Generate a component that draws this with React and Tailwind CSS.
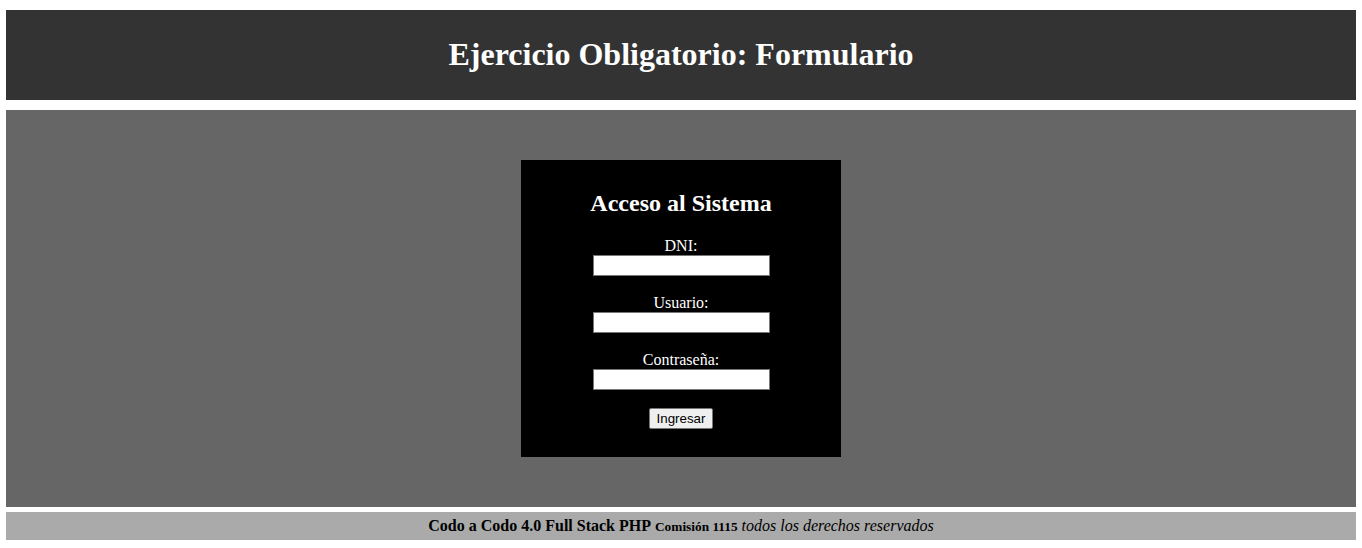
import React from "react";

const Field = ({ label, type = "text", first }) => (
  <div className={`flex flex-col items-center ${first ? "" : "mt-[17px]"}`}>
    <label className="block text-[16px] leading-[19px] text-white">{label}</label>
    <input
      type={type}
      className="w-[177px] h-[21px] bg-white border border-[#767676] px-[2px] text-[13.33px] text-black outline-none"
      style={{ fontFamily: '"Liberation Sans", Arial, sans-serif' }}
    />
  </div>
);

const App = () => {
  return (
    <div
      className="min-h-screen bg-white px-[6px] pt-[10px]"
      style={{ fontFamily: '"Liberation Serif", "Times New Roman", serif' }}
    >
      <header className="h-[90px] bg-[#333333] pt-[26px]">
        <h1 className="text-center text-[32px] leading-[37px] font-bold text-white">
          Ejercicio Obligatorio: Formulario
        </h1>
      </header>

      <main className="mt-[10px] bg-[#666666] py-[50px] flex justify-center">
        <form
          className="w-[320px] bg-black pt-[29px] pb-[28px] flex flex-col items-center"
          onSubmit={(e) => e.preventDefault()}
        >
          <h2 className="text-[24px] leading-[28px] font-bold text-white mb-[19px]">
            Acceso al Sistema
          </h2>
          <Field label="DNI:" first />
          <Field label="Usuario:" />
          <Field label="Contraseña:" type="password" />
          <button
            type="submit"
            className="mt-[18px] w-[64px] h-[21px] bg-[#efefef] border border-[#767676] rounded-[2px] text-[13.33px] leading-[16px] text-black"
            style={{ fontFamily: '"Liberation Sans", Arial, sans-serif' }}
          >
            Ingresar
          </button>
        </form>
      </main>

      <footer className="mt-[5px] h-[28px] bg-[#aaaaaa] flex items-center justify-center text-black">
        <p className="text-[16px] leading-[18px]">
          <b>Codo a Codo 4.0 Full Stack PHP</b>{" "}
          <small className="text-[13.33px] font-bold">Comisión 1115</small>{" "}
          <i>todos los derechos reservados</i>
        </p>
      </footer>
    </div>
  );
};

export default App;
